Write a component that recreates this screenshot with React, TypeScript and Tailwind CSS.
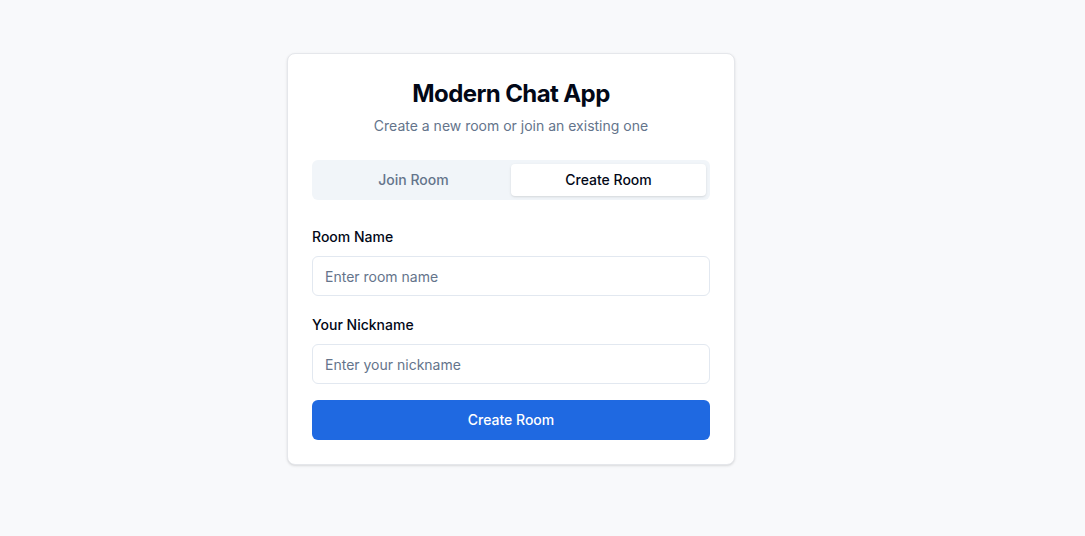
import React, { useState } from 'react';

export default function App() {
  const [tab, setTab] = useState<'join' | 'create'>('create');
  const [roomName, setRoomName] = useState('');
  const [nickname, setNickname] = useState('');

  return (
    <div
      className="min-h-screen w-full bg-[#f8f9fb] pt-[53px] pl-[287px]"
      style={{ fontFamily: 'Inter, "Noto Sans", sans-serif' }}
    >
      <div className="w-[448px] rounded-lg border border-[#e5e7eb] bg-white shadow-sm">
        {/* header */}
        <div className="flex flex-col items-center px-6 pt-6">
          <h1 className="text-2xl font-bold leading-8 tracking-tight text-[#020817]">Modern Chat App</h1>
          <p className="mt-1.5 text-sm leading-5 text-[#64748b]">Create a new room or join an existing one</p>
        </div>

        <div className="px-6 pt-6 pb-6">
          {/* tabs */}
          <div className="grid h-10 grid-cols-2 items-center rounded-md bg-[#f1f5f9] p-1">
            <button
              onClick={() => setTab('join')}
              className={
                tab === 'join'
                  ? 'h-8 rounded-sm bg-white text-sm font-medium text-[#020817] shadow-sm'
                  : 'h-8 rounded-sm text-sm font-medium text-[#64748b]'
              }
            >
              Join Room
            </button>
            <button
              onClick={() => setTab('create')}
              className={
                tab === 'create'
                  ? 'h-8 rounded-sm bg-white text-sm font-medium text-[#020817] shadow-sm'
                  : 'h-8 rounded-sm text-sm font-medium text-[#64748b]'
              }
            >
              Create Room
            </button>
          </div>

          <div className="mt-[27px] flex flex-col">
            <label className="text-sm font-medium leading-5 text-[#020817]">Room Name</label>
            <input
              value={roomName}
              onChange={e => setRoomName(e.target.value)}
              placeholder="Enter room name"
              className="mt-[9px] h-10 w-full rounded-md border border-[#e2e8f0] bg-white px-3 text-sm text-[#020817] outline-none placeholder:text-[#64748b]"
            />

            <label className="mt-[19px] text-sm font-medium leading-5 text-[#020817]">Your Nickname</label>
            <input
              value={nickname}
              onChange={e => setNickname(e.target.value)}
              placeholder="Enter your nickname"
              className="mt-[9px] h-10 w-full rounded-md border border-[#e2e8f0] bg-white px-3 text-sm text-[#020817] outline-none placeholder:text-[#64748b]"
            />

            <button className="mt-4 h-10 w-full rounded-md bg-[#1f69e1] text-sm font-medium text-white">
              {tab === 'create' ? 'Create Room' : 'Join Room'}
            </button>
          </div>
        </div>
      </div>
    </div>
  );
}
